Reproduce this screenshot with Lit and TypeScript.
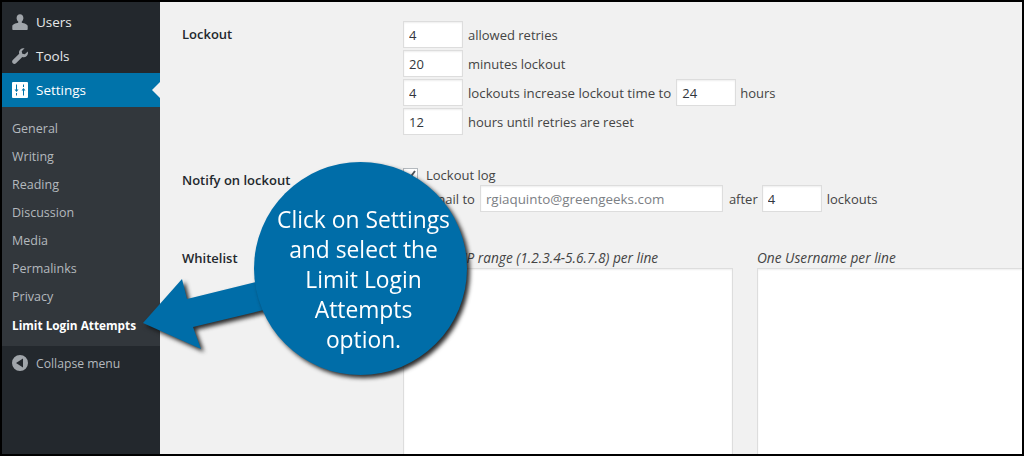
import { LitElement, html, css, svg } from "lit";
import { customElement } from "lit/decorators.js";

const icons = {
  users: svg`<path d="M10 2.200c-2 0-3.400 1.600-3.400 3.700 0 1.500.7 2.900 1.600 3.600v1.200c-2.600.5-5.900 1.600-5.900 3.400V17c0 .6.5 1 1 1h13.400c.5 0 1-.4 1-1v-2.900c0-1.800-3.300-2.900-5.900-3.400V9.500c.9-.7 1.600-2.100 1.600-3.600 0-2.100-1.400-3.700-3.400-3.700z"/>`,
  tools: svg`<path d="M17.800 5.500c.5 1.500.1 3.200-1.100 4.400-1.200 1.200-2.900 1.500-4.400 1L6 17.300c-.9.900-2.300.9-3.200 0-.9-.9-.9-2.300 0-3.200l6.400-6.300c-.5-1.500-.1-3.200 1.100-4.400 1.200-1.200 2.800-1.500 4.300-1.100L11.700 5.200l.6 2.500 2.500.6z"/>`,
  settings: svg`<path fill-rule="evenodd" d="M3 2h14a1 1 0 0 1 1 1v14a1 1 0 0 1-1 1H3a1 1 0 0 1-1-1V3a1 1 0 0 1 1-1zm3 2.500v5H4.500L6.500 12l2-2.500H7v-5H6zM6 13v2.500h1V13H6zm7-8.500V7h1V4.500h-1zM11.500 10.500l2 -2.500 2 2.500H14v5h-1v-5h-1.500z"/>`,
  collapse: svg`<path fill-rule="evenodd" d="M10 2a8 8 0 1 1 0 16 8 8 0 0 1 0-16zm3 3.500L6 10l7 4.500v-9z"/>`,
};

@customElement("app-root")
export class AppRoot extends LitElement {
  static styles = css`
    :host {
      display: block;
      width: 1024px;
      height: 456px;
      background: #000;
      overflow: hidden;
      font-family: "Open Sans", "Liberation Sans", sans-serif;
    }
    * { box-sizing: border-box; }
    .frame {
      position: relative;
      display: flex;
      width: 1020px;
      height: 452px;
      margin: 2px 0 0 2px;
      overflow: hidden;
      background: #f1f1f1;
    }
    .side {
      flex: 0 0 158px;
      background: #23282d;
      padding-top: 3px;
      color: #eee;
      font-size: 13.5px;
    }
    .item {
      position: relative;
      display: flex;
      align-items: center;
      gap: 6px;
      height: 34px;
      padding-left: 8px;
      color: #e6e8e9;
    }
    .item svg { width: 20px; height: 20px; fill: #a0a5aa; flex: none; }
    .item.active { background: #0073aa; color: #fff; }
    .item.active svg { fill: #fff; }
    .item.active::after {
      content: "";
      position: absolute;
      right: 0;
      top: 9px;
      border: 8px solid transparent;
      border-right-color: #f1f1f1;
      border-left-width: 0;
    }
    .item.muted { color: #b4b9be; font-size: 12.2px; }
    .sub {
      background: #32373c;
      padding: 8px 0 7px;
    }
    .sub div {
      height: 28px;
      line-height: 28px;
      padding-left: 10px;
      font-size: 12.5px;
      color: #b4b9be;
    }
    .sub div.current { color: #fff; font-weight: 700; font-size: 11.8px; }
    .main {
      flex: 1;
      min-width: 0;
      padding: 19px 0 0 22px;
      color: #444;
      font-size: 13px;
    }
    .section {
      display: grid;
      grid-template-columns: 221px 1fr;
    }
    .section.notify { margin-top: 30px; }
    .section.white { margin-top: 37px; }
    .label { font-weight: 600; color: #23282d; line-height: 26px; }
    .notify .label { padding-top: 2px; }
    .white .label { line-height: 18px; }
    .lines { display: flex; flex-direction: column; gap: 2px; }
    .line { display: flex; align-items: center; gap: 5px; white-space: nowrap; }
    .long { font-size: 13.26px; }
    input, textarea {
      display: block;
      font: inherit;
      background: #fff;
      border: 1px solid #ddd;
      box-shadow: inset 0 1px 2px rgba(0, 0, 0, 0.07);
      color: #32373c;
      outline: none;
      margin: 0;
    }
    input { width: 60px; height: 27px; padding: 0 5px; }
    input.hours { margin-right: -1px; }
    input.mail { width: 243px; margin-right: 1px; font-size: 13.4px; }
    input.count { margin-left: -1px; }
    input::placeholder { color: #7c8085; opacity: 1; }
    .check-line { height: 18px; gap: 8px; padding-top: 1px; }
    .check {
      display: block;
      flex: none;
      width: 15px;
      height: 15px;
      margin-top: 2px;
      background: #fff;
      border: 1px solid #b4b9be;
    }
    .check svg { display: block; width: 13px; height: 13px; fill: none; stroke: #50575e; stroke-width: 2; }
    .mail-line { padding-left: 23px; }
    .lists { display: flex; gap: 24px; }
    .list { flex: none; }
    .list.a { width: 330px; }
    .list.b { width: 280px; }
    .list em { display: block; height: 19px; line-height: 18px; font-size: 13.7px; white-space: nowrap; }
    textarea { display: block; width: 100%; height: 240px; resize: none; padding: 2px 6px; }
    .arrow {
      position: absolute;
      left: 0;
      top: 0;
      width: 1020px;
      height: 452px;
      pointer-events: none;
      filter: drop-shadow(3px 3px 2px rgba(20, 20, 20, 0.9));
    }
    .bubble {
      position: absolute;
      left: 252px;
      top: 160px;
      width: 213px;
      height: 213px;
      border-radius: 50%;
      background: #006da8;
      color: #fff;
      font-size: 22.8px;
      line-height: 30px;
      text-align: center;
      display: flex;
      align-items: center;
      justify-content: center;
      padding: 23px 0 0 6px;
      white-space: nowrap;
      filter: drop-shadow(3px 3px 2px rgba(20, 20, 20, 0.9));
    }
  `;

  render() {
    const subs = ["General", "Writing", "Reading", "Discussion", "Media", "Permalinks", "Privacy"];
    return html`
      <div class="frame">
        <nav class="side">
          <div class="item"><svg viewBox="0 0 20 20">${icons.users}</svg>Users</div>
          <div class="item"><svg viewBox="0 0 20 20">${icons.tools}</svg>Tools</div>
          <div class="item active"><svg viewBox="0 0 20 20">${icons.settings}</svg>Settings</div>
          <div class="sub">
            ${subs.map((s) => html`<div>${s}</div>`)}
            <div class="current">Limit Login Attempts</div>
          </div>
          <div class="item muted"><svg viewBox="0 0 20 20">${icons.collapse}</svg>Collapse menu</div>
        </nav>
        <main class="main">
          <section class="section">
            <div class="label">Lockout</div>
            <div class="lines">
              <div class="line"><input value="4" />allowed retries</div>
              <div class="line"><input value="20" />minutes lockout</div>
              <div class="line"><input value="4" /><span class="long">lockouts increase lockout time to</span><input value="24" class="hours" />hours</div>
              <div class="line"><input value="12" />hours until retries are reset</div>
            </div>
          </section>
          <section class="section notify">
            <div class="label">Notify on lockout</div>
            <div class="lines">
              <div class="line check-line">
                <span class="check"><svg viewBox="0 0 13 13"><path d="M2 6.500l3 3.500 6-8" /></svg></span>Lockout log
              </div>
              <div class="line mail-line">Email to <input class="mail" placeholder="rgiaquinto@greengeeks.com" />after<input value="4" class="count" />lockouts</div>
            </div>
          </section>
          <section class="section white">
            <div class="label">Whitelist</div>
            <div class="lists">
              <div class="list a"><em>One IP or IP range (1.2.3.4-5.6.7.8) per line</em><textarea></textarea></div>
              <div class="list b"><em>One Username per line</em><textarea></textarea></div>
            </div>
          </section>
        </main>
        <svg class="arrow" viewBox="0 0 1020 452">
          <path d="M141 321L180 277L185 297L262 278L270 306L191 325L199 347Z" fill="#006da8" />
        </svg>
        <div class="bubble"><span>Click on Settings<br />and select the<br />Limit Login<br />Attempts<br />option.</span></div>
      </div>
    `;
  }
}
